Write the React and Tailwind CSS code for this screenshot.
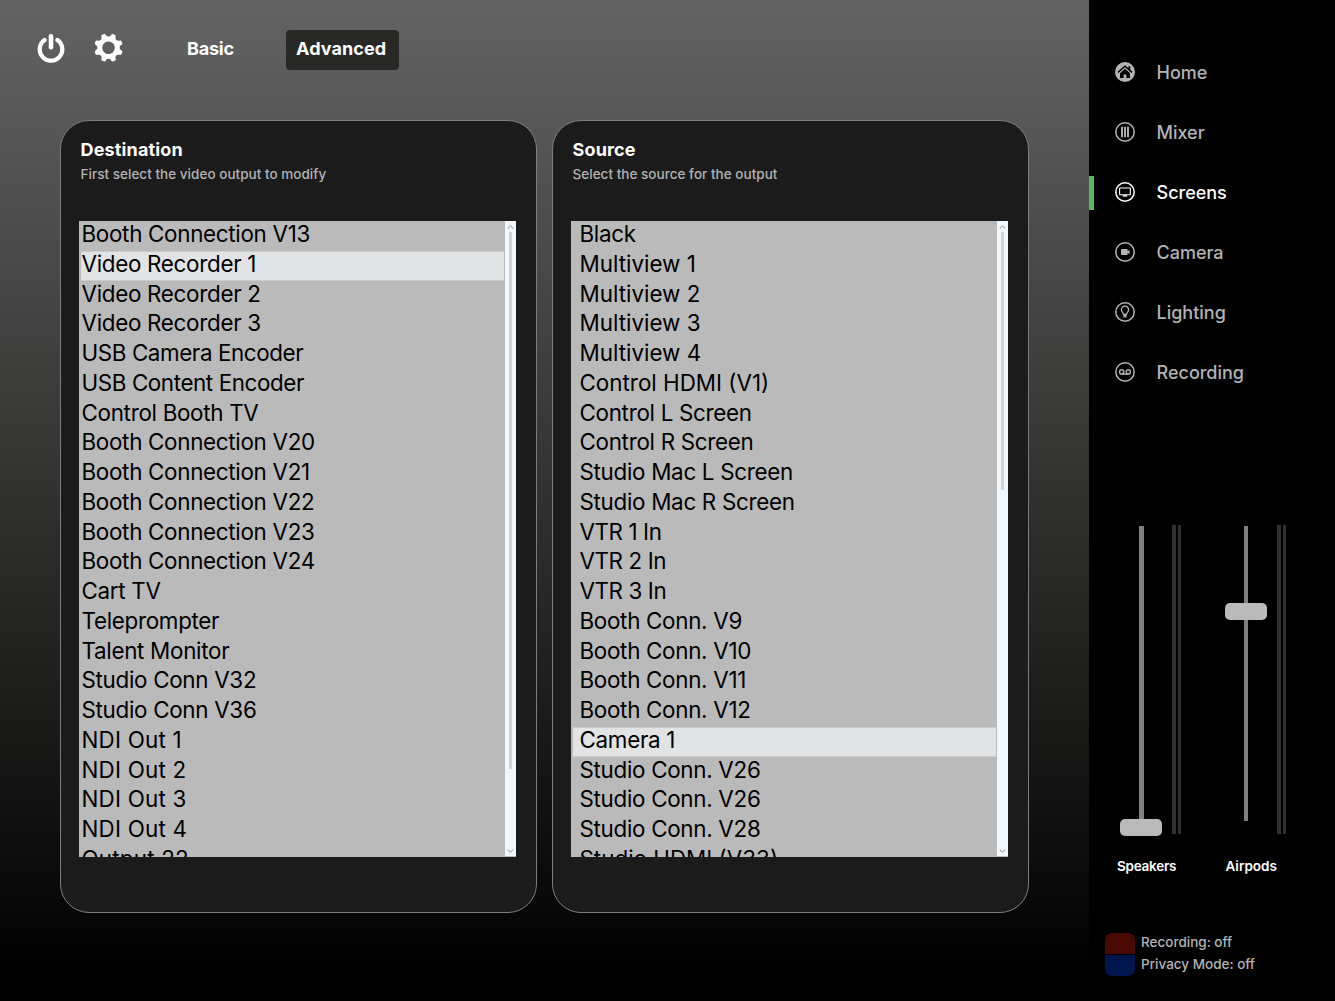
import React, { useState } from 'react';
import clsx from 'clsx';

const destinations = [
  'Booth Connection V13',
  'Video Recorder 1',
  'Video Recorder 2',
  'Video Recorder 3',
  'USB Camera Encoder',
  'USB Content Encoder',
  'Control Booth TV',
  'Booth Connection V20',
  'Booth Connection V21',
  'Booth Connection V22',
  'Booth Connection V23',
  'Booth Connection V24',
  'Cart TV',
  'Teleprompter',
  'Talent Monitor',
  'Studio Conn V32',
  'Studio Conn V36',
  'NDI Out 1',
  'NDI Out 2',
  'NDI Out 3',
  'NDI Out 4',
  'Output 22',
];

const sources = [
  'Black',
  'Multiview 1',
  'Multiview 2',
  'Multiview 3',
  'Multiview 4',
  'Control HDMI (V1)',
  'Control L Screen',
  'Control R Screen',
  'Studio Mac L Screen',
  'Studio Mac R Screen',
  'VTR 1 In',
  'VTR 2 In',
  'VTR 3 In',
  'Booth Conn. V9',
  'Booth Conn. V10',
  'Booth Conn. V11',
  'Booth Conn. V12',
  'Camera 1',
  'Studio Conn. V26',
  'Studio Conn. V26',
  'Studio Conn. V28',
  'Studio HDMI (V33)',
];

const getTracking = (item) => {
  if (/^(NDI|Output)/.test(item)) return 'tracking-[0.2px]';
  if (/^Multiview|HDMI/.test(item)) return 'tracking-normal';
  if (/^(USB|VTR)/.test(item)) return 'tracking-[-0.4px]';
  return 'tracking-[-0.3px]';
};

const PowerIcon = () => (
  <svg width="28" height="30" viewBox="0 0 28 30" fill="none" stroke="white" strokeLinecap="round">
    <path d="M7.6 7a11.3 11.3 0 1 0 12.8 0" strokeWidth="4.2" />
    <path d="M14 3.2v11" strokeWidth="4.6" />
  </svg>
);

const GearIcon = () => (
  <svg width="28" height="30" viewBox="-13.5 -14.7 28 30">
    <g fill="white">
      {[22.5, 67.5, 112.5, 157.5, 202.5, 247.5, 292.5, 337.5].map((angle) => (
        <path key={angle} d="M-4.6 -9.6Q-2.5 -10.8 -2.2 -13.4Q-2.1 -14.4 -1.3 -14.4H1.3Q2.1 -14.4 2.2 -13.4Q2.5 -10.8 4.6 -9.6Z" transform={`rotate(${angle})`} />
      ))}
    </g>
    <circle r="8.6" fill="none" stroke="white" strokeWidth="4.6" />
  </svg>
);

const NavIcon = ({ name }) => (
  <svg width="20" height="20" viewBox="0 0 20 20" fill="none" stroke="currentColor" className="shrink-0">
    {name === 'Home' ? (
      <>
        <circle cx="10" cy="10" r="10" fill="currentColor" stroke="none" />
        <path d="M3 10.4L10 4.3l7 6.1" stroke="black" strokeWidth="1.5" />
        <path d="M13.4 4.2h1.8v4l-1.8-1.6z" fill="black" stroke="none" />
        <path d="M10 6.8l5 4.4V16h-3.6v-3.6H8.6V16H5v-4.8z" fill="black" stroke="none" />
      </>
    ) : (
      <circle cx="10" cy="10" r="9.2" strokeWidth="1.5" />
    )}
    {name === 'Mixer' && <path d="M7 4.8v10.4M10 4.8v10.4M13 4.8v10.4" strokeWidth="1.9" />}
    {name === 'Screens' && (
      <>
        <rect x="4.6" y="6" width="10.8" height="6.8" rx="0.6" strokeWidth="1.1" />
        <path d="M7.8 13.9h4.4" strokeWidth="1.4" />
      </>
    )}
    {name === 'Camera' && (
      <g fill="currentColor" stroke="none">
        <rect x="6" y="6.9" width="6.6" height="6.2" rx="0.7" />
        <path d="M12 9.4l2.5-1.5v4.2L12 10.8z" />
      </g>
    )}
    {name === 'Lighting' && (
      <>
        <path d="M8.5 12.4c0-1.7-2.1-2.4-2.1-4.6a3.6 3.6 0 0 1 7.2 0c0 2.2-2.1 2.9-2.1 4.6z" strokeWidth="1.3" />
        <path d="M8.4 12.8h3.2v2.6H8.4z" fill="currentColor" stroke="none" />
      </>
    )}
    {name === 'Recording' && (
      <>
        <circle cx="6.7" cy="9.9" r="2.1" strokeWidth="1.4" />
        <circle cx="13.3" cy="9.9" r="2.1" strokeWidth="1.4" />
        <path d="M6.8 12.2h6.4" strokeWidth="1.3" />
      </>
    )}
  </svg>
);

const Arrow = ({ down }) => (
  <svg width="7" height="4" viewBox="0 0 7 4" fill="none" stroke="#8a8a8a" className={clsx('shrink-0', down && 'rotate-180')}>
    <path d="M0.6 3.6L3.5 0.8l2.9 2.8" />
  </svg>
);

const ListPanel = ({ title, subtitle, items, selected, onSelect, indent, thumb }) => (
  <section className="w-[477px] h-[793px] rounded-[29px] border border-[#7d7d7d] bg-[#1b1b1b] pl-[18px] pt-[17px]">
    <h2 className="pl-[1.5px] text-[18px] leading-6 font-bold tracking-[0.15px] text-white">{title}</h2>
    <p className="pl-[1.5px] text-[13.5px] leading-6 font-medium tracking-[0.03px] text-[#b3b3b3]">{subtitle}</p>
    <div className="mt-[35px] flex h-[636px] w-[437px] overflow-hidden bg-[#bababa]">
      <ul className="flex-1 pl-[2px] pr-px text-[22.4px] leading-[23px] text-black">
        {items.map((item, index) => (
          <li
            key={index}
            onClick={() => onSelect(index)}
            className={clsx(
              'h-[29.75px] cursor-default whitespace-nowrap border-y',
              indent ? 'pl-[6.5px]' : 'pl-[0.5px]',
              getTracking(item),
              index === selected ? 'border-[#cbcccd] bg-[#e1e3e5]' : 'border-transparent'
            )}
          >
            {item}
          </li>
        ))}
      </ul>
      <div className="mb-px flex w-[11px] flex-col items-center bg-[#f0f8ff] pt-1 pb-[3px]">
        <Arrow />
        <div className="mt-[3px] flex-1">
          <div className={clsx('w-[3px] bg-[#d0d2d6]', thumb)} />
        </div>
        <Arrow down />
      </div>
    </div>
  </section>
);

const Fader = ({ label, level, trackClass, labelClass }) => (
  <div className="w-[105px]">
    <div className="flex h-[310px]">
      <div className="relative ml-[15px] flex w-[42px] justify-center pt-px">
        <div className={clsx('h-[295px] bg-[#808080]', trackClass)} />
        <div className="absolute left-0 h-[17px] w-[42px] rounded-[5px] bg-[#bababa]" style={{ top: level }} />
      </div>
      <div className="ml-[10px] flex h-[309px] gap-[2px]">
        <div className="w-1 bg-[#303030]" />
        <div className="w-[3px] bg-[#303030]" />
      </div>
    </div>
    <p className={clsx('mt-[21px] text-[13.5px] leading-5 font-semibold text-white', labelClass)}>{label}</p>
  </div>
);

const App = () => {
  const [mode, setMode] = useState('Advanced');
  const [page, setPage] = useState('Screens');
  const [destination, setDestination] = useState(1);
  const [source, setSource] = useState(17);

  return (
    <div className="flex h-[1001px] w-[1335px] overflow-hidden bg-black font-['Inter',sans-serif]">
      <main className="w-[1089px] bg-[linear-gradient(#636363_0%,#585858_11%,#262624_60%,#080808_90%,#000_97%)]">
        <header className="flex h-[120px] items-start pl-[37px] pt-[30px]">
          <div className="flex gap-[30px] pt-[3px]">
            <PowerIcon />
            <GearIcon />
          </div>
          <div className="ml-[54px] flex gap-[42px]">
            {['Basic', 'Advanced'].map((name) => (
              <button
                key={name}
                onClick={() => setMode(name)}
                className={clsx(
                  'h-10 rounded-[4px] pl-[10px] pb-[3px] text-left text-[18px] font-bold text-white',
                  name === 'Basic' ? 'w-[67px] tracking-[-0.2px]' : 'w-[113px] tracking-[0.1px]',
                  mode === name && 'bg-[#282827]'
                )}
              >
                {name}
              </button>
            ))}
          </div>
        </header>
        <div className="flex gap-[15px] pl-[60px]">
          <ListPanel
            title="Destination"
            subtitle="First select the video output to modify"
            items={destinations}
            selected={destination}
            onSelect={setDestination}
            thumb="h-[537px]"
          />
          <ListPanel
            title="Source"
            subtitle="Select the source for the output"
            items={sources}
            selected={source}
            onSelect={setSource}
            indent
            thumb="h-[258px]"
          />
        </div>
      </main>

      <aside className="w-[246px] bg-black">
        <nav className="pt-[42px]">
          {['Home', 'Mixer', 'Screens', 'Camera', 'Lighting', 'Recording'].map((name) => (
            <button
              key={name}
              onClick={() => setPage(name)}
              className={clsx('flex h-[60px] w-full items-center', page === name ? 'text-white' : 'text-[#b3b3b3]')}
            >
              <span className={clsx('mt-[2px] mr-[21px] h-[34px] w-[5px]', page === name && 'bg-[#57b560]')} />
              <NavIcon name={name} />
              <span className="ml-[21.5px] text-[18px] font-medium">{name}</span>
            </button>
          ))}
        </nav>

        <div className="mt-[123px] flex pl-4">
          <Fader label="Speakers" level={294} trackClass="w-[5px]" labelClass="pl-[12px] tracking-[-0.25px]" />
          <Fader label="Airpods" level={78} trackClass="w-1" labelClass="pl-[15.5px]" />
        </div>

        <div className="mt-[57px] flex pl-4">
          <div className="flex w-[30px] flex-col gap-px">
            <div className="h-[21px] rounded-t-[7px] bg-[#4a0a03]" />
            <div className="h-[21px] rounded-b-[7px] bg-[#00144d]" />
          </div>
          <div className="-mt-[2px] pl-[6px] text-[13.5px] leading-[22px] font-medium text-[#b3b3b3]">
            <p>Recording: off</p>
            <p>Privacy Mode: off</p>
          </div>
        </div>
      </aside>
    </div>
  );
};

export default App;
